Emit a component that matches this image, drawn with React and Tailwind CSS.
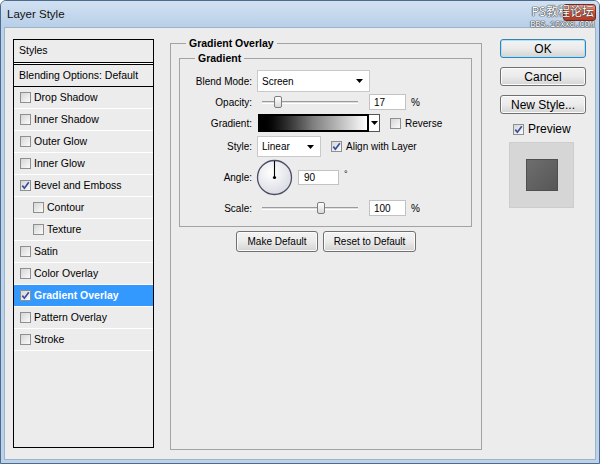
import React from 'react';

const ITEMS = [
  { label: 'Drop Shadow' },
  { label: 'Inner Shadow' },
  { label: 'Outer Glow' },
  { label: 'Inner Glow' },
  { label: 'Bevel and Emboss', checked: true },
  { label: 'Contour', indent: true },
  { label: 'Texture', indent: true },
  { label: 'Satin' },
  { label: 'Color Overlay' },
  { label: 'Gradient Overlay', checked: true, active: true },
  { label: 'Pattern Overlay' },
  { label: 'Stroke' },
];

function Check({ checked }) {
  return (
    <span className="w-[11px] h-[11px] shrink-0 border border-[#8e8f8f] bg-linear-to-br from-[#d6d6d6] to-[#fbfbfb] flex items-center justify-center">
      {checked && (
        <svg width="9" height="9" viewBox="0 0 9 9">
          <path d="M1.3 4.6 L3.4 7.2 L7.8 1.2" fill="none" stroke="#3b4fa0" strokeWidth="1.7" />
        </svg>
      )}
    </span>
  );
}

function Arrow() {
  return (
    <svg width="7" height="4" viewBox="0 0 7 4">
      <path d="M0 0 H7 L3.5 4 Z" fill="#000" />
    </svg>
  );
}

function Btn({ children, className = '', primary }) {
  return (
    <div
      className={`flex items-center justify-center rounded-[3px] border bg-linear-to-b from-[#f3f3f3] via-[#ebebeb] to-[#d4d4d4] ${
        primary
          ? 'border-[#3c7fb1] shadow-[inset_0_0_0_1px_#a7e4f9]'
          : 'border-[#707070] shadow-[inset_0_0_0_1px_#fbfbfb]'
      } ${className}`}
    >
      {children}
    </div>
  );
}

function Slider({ thumb }) {
  return (
    <div className="ml-[10px] w-[96px] h-[16px] relative flex items-center">
      <div className="w-full h-[3px] border-t border-[#9b9b9b] border-b border-b-white bg-[#dedede]" />
      <div
        className="absolute top-[2px] w-[8px] h-[12px] rounded-[2px] border border-[#7d7d7d] bg-linear-to-b from-white to-[#d9d9d9]"
        style={{ left: thumb }}
      />
    </div>
  );
}

function Field({ label, children, className = '' }) {
  return (
    <div className={`flex items-center ${className}`}>
      <span className="w-[72px] text-right">{label}</span>
      {children}
    </div>
  );
}

export default function App() {
  return (
    <div className="w-[600px] h-[464px] flex flex-col overflow-hidden rounded-t-[6px] border border-[#4d6b8c] bg-[#bcd2ea] font-['Liberation_Sans',Arial,sans-serif] text-black">
      {/* Title bar */}
      <div className="h-[26px] relative flex items-start bg-linear-to-b from-[#d2e1f1] to-[#b8cfe9]">
        <span className="ml-[6px] mt-[6px] text-[11.5px] leading-[14px] text-[#111]">Layer Style</span>
        <div className="ml-auto mr-[3px] mt-[3px] w-[33px] h-[17px] rounded-[3px] border border-[#7a2a20] bg-linear-to-b from-[#e7a296] via-[#c9543f] to-[#b33a26]" />
        <div className="absolute right-[5px] top-[1px] flex flex-col items-end gap-[2px] text-white [text-shadow:0_0_1px_#333,0_0_1px_#333,0_0_1px_#333]">
          <span className="text-[12px] leading-[17px] font-['Noto_Sans_CJK_SC',sans-serif] tracking-[0px]">PS教程论坛</span>
          <span className="text-[9px] leading-[9px] font-['Liberation_Mono',monospace] tracking-[-0.5px]">BBS.16XX8.COM</span>
        </div>
      </div>

      {/* Body */}
      <div className="flex-1 mx-[3px] mb-[3px] bg-[#ececec] border border-[#9cb3cc] flex items-start pl-[8px] pt-[11px]">
        {/* Styles list */}
        <div className="w-[141px] h-[409px] border border-black text-[10.5px] flex flex-col">
          <div className="h-[23px] border-b border-black flex items-center pl-[5px]">Styles</div>
          <div className="h-[1px] bg-white" />
          <div className="h-[23px] border-y border-black flex items-center pl-[5px]">Blending Options: Default</div>
          {ITEMS.map(item => (
            <div
              key={item.label}
              className={`h-[22px] border-b border-white flex items-center ${item.indent ? 'pl-[19px]' : 'pl-[6px]'} ${
                item.active ? 'bg-[#3399ff] text-white font-bold' : ''
              }`}
            >
              <Check checked={item.checked} />
              <span className="ml-[3px]">{item.label}</span>
            </div>
          ))}
        </div>

        {/* Gradient Overlay group */}
        <div className="ml-[16px] mt-[4px] w-[312px] h-[407px] relative border border-[#a3a3a3] text-[10px]">
          <span className="absolute left-[15px] -top-[7px] px-[3px] bg-[#ececec] font-bold text-[10.5px] leading-[13px]">Gradient Overlay</span>

          <div className="mt-[14px] ml-[8px] w-[293px] h-[169px] relative border border-[#a3a3a3] pt-[11px] flex flex-col">
            <span className="absolute left-[15px] -top-[7px] px-[3px] bg-[#ececec] font-bold text-[10.5px] leading-[13px]">Gradient</span>

            <Field label="Blend Mode:" className="h-[22px]">
              <div className="ml-[5px] w-[113px] h-[22px] bg-white border border-[#c9c9c9] flex items-center justify-between pl-[4px] pr-[6px]">
                <span>Screen</span>
                <Arrow />
              </div>
            </Field>

            <Field label="Opacity:" className="mt-[2px] h-[16px]">
              <Slider thumb={12} />
              <div className="ml-[11px] w-[37px] h-[16px] bg-white border border-[#c2c2c2] flex items-center pl-[4px]">17</div>
              <span className="ml-[5px]">%</span>
            </Field>

            <Field label="Gradient:" className="mt-[4px] h-[18px]">
              <div className="ml-[6px] w-[111px] h-[18px] border-2 border-black bg-linear-to-r from-black via-[#808080] to-white" />
              <div className="w-[11px] h-[18px] bg-white border border-l-0 border-[#555] flex items-center justify-center">
                <Arrow />
              </div>
              <span className="ml-[10px]"><Check /></span>
              <span className="ml-[4px]">Reverse</span>
            </Field>

            <Field label="Style:" className="mt-[4px] h-[21px]">
              <div className="ml-[5px] w-[64px] h-[21px] bg-white border border-[#c9c9c9] flex items-center justify-between pl-[4px] pr-[6px]">
                <span>Linear</span>
                <Arrow />
              </div>
              <span className="ml-[10px]"><Check checked /></span>
              <span className="ml-[4px]">Align with Layer</span>
            </Field>

            <Field label="Angle:" className="mt-[2px] h-[37px]">
              <svg className="ml-[4px]" width="37" height="37" viewBox="0 0 37 37">
                <defs>
                  <radialGradient id="dial" cx="40%" cy="35%" r="70%">
                    <stop offset="0" stopColor="#ffffff" />
                    <stop offset="1" stopColor="#d9dae2" />
                  </radialGradient>
                </defs>
                <circle cx="18.5" cy="18.5" r="17" fill="url(#dial)" stroke="#4a4e66" strokeWidth="1.3" />
                <line x1="18.5" y1="18.5" x2="18.5" y2="2" stroke="#000" strokeWidth="1.1" />
                <circle cx="18.5" cy="18.5" r="1.6" fill="#000" />
              </svg>
              <div className="ml-[5px] w-[41px] h-[15px] bg-white border border-[#c2c2c2] flex items-center pl-[5px]">90</div>
              <span className="ml-[5px] self-start mt-[9px] text-[9px]">°</span>
            </Field>

            <Field label="Scale:" className="mt-[4px] h-[16px]">
              <Slider thumb={55} />
              <div className="ml-[11px] w-[37px] h-[16px] bg-white border border-[#c2c2c2] flex items-center pl-[4px]">100</div>
              <span className="ml-[5px]">%</span>
            </Field>
          </div>

          <div className="mt-[4px] flex justify-center gap-[5px]">
            <Btn className="w-[82px] h-[21px]">Make Default</Btn>
            <Btn className="w-[93px] h-[21px]">Reset to Default</Btn>
          </div>
        </div>

        {/* Right column */}
        <div className="ml-[18px] w-[86px] flex flex-col text-[12px]">
          <Btn primary className="h-[19px]">OK</Btn>
          <Btn className="mt-[9px] h-[19px]">Cancel</Btn>
          <Btn className="mt-[9px] h-[19px]">New Style...</Btn>
          <div className="mt-[8px] h-[14px] ml-[13px] flex items-center">
            <Check checked />
            <span className="ml-[4px]">Preview</span>
          </div>
          <div className="mt-[6px] ml-[9px] w-[65px] h-[66px] bg-[#d6d6d6] border border-[#cdcdcd] flex items-center justify-center">
            <div className="w-[32px] h-[32px] border border-[#4f4f4f] bg-linear-to-br from-[#6e6e6e] to-[#575757]" />
          </div>
        </div>
      </div>
    </div>
  );
}
